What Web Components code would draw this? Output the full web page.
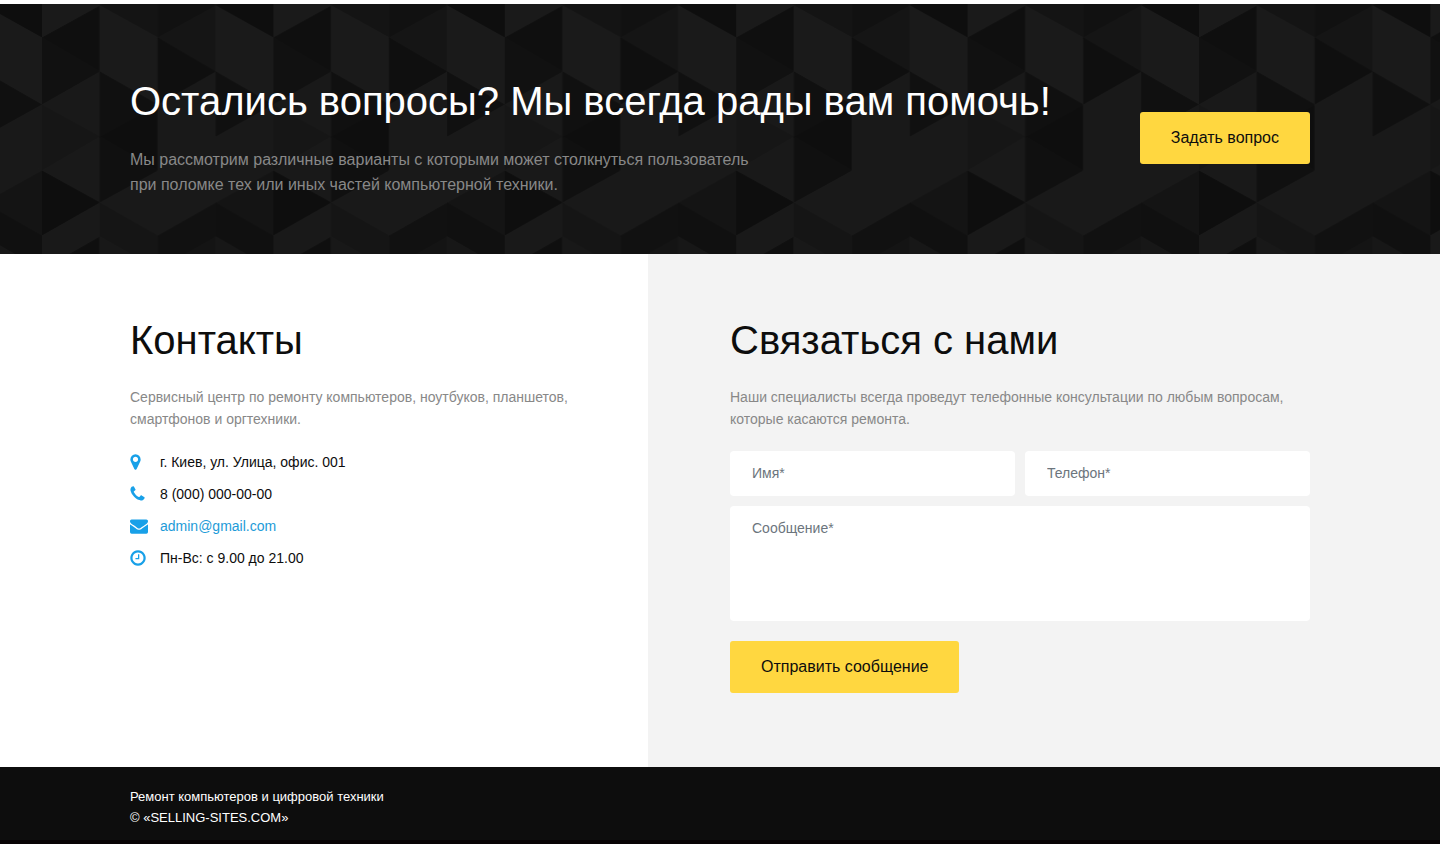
<!DOCTYPE html>
<html lang="ru">
<head>
<meta charset="utf-8">
<meta name="viewport" content="width=device-width, initial-scale=1">
<title>Ремонт компьютеров и цифровой техники</title>
<style>
body { margin: 0; padding-top: 4px; background: #fff; color: #0d0d0d; font-family: "Liberation Sans", Arial, sans-serif; font-size: 14px; }
</style>
</head>
<body>
<question-banner>
  <span slot="title">Остались вопросы? Мы всегда рады вам помочь!</span>
  <span slot="text">Мы рассмотрим различные варианты с которыми может столкнуться пользователь при поломке тех или иных частей компьютерной техники.</span>
  <action-button slot="action">Задать вопрос</action-button>
</question-banner>
<contact-section>
  <contact-info slot="info">
    <section-heading>Контакты
      <span slot="lead">Сервисный центр по ремонту компьютеров, ноутбуков, планшетов, смартфонов и оргтехники.</span>
    </section-heading>
    <contact-item icon="pin">г. Киев, ул. Улица, офис. 001</contact-item>
    <contact-item icon="phone">8 (000) 000-00-00</contact-item>
    <contact-item icon="mail" href="mailto:admin@gmail.com">admin@gmail.com</contact-item>
    <contact-item icon="clock">Пн-Вс: с 9.00 до 21.00</contact-item>
  </contact-info>
  <contact-form slot="form">
    <section-heading>Связаться с нами
      <span slot="lead">Наши специалисты всегда проведут телефонные консультации по любым вопросам, которые касаются ремонта.</span>
    </section-heading>
  </contact-form>
</contact-section>
<site-footer>
  <span slot="about">Ремонт компьютеров и цифровой техники</span>
  <span slot="copyright">© «SELLING-SITES.COM»</span>
</site-footer>

<script>
const define = (name, html, setup) => {
  customElements.define(name, class extends HTMLElement {
    constructor() {
      super();
      this.attachShadow({ mode: 'open' }).innerHTML = html;
    }
    connectedCallback() {
      if (setup) setup(this, this.shadowRoot);
    }
  });
};

/* Triangular mosaic: four columns per tile, shades listed from top to bottom.
   The last shade of a column fills the half-step triangle at the tile's foot. */
const edges = [-28, 38, 105, 171, 236, 302];
const middles = [6, 72, 137, 203, 269];
const columns = [0, 58, 116, 174, 231.4];
const shades = [
  ['1a', '0f', '11', '19', '16', '19', '0e', '19', '19', '0f'],
  ['14', '1a', '1a', '10', '0e', '10', '19', '15', '15', '18'],
  ['11', '15', '0f', '19', '19', '19', '19', '11', '11', '14'],
  ['0e', '1a', '1a', '10', '19', '19', '14', '10', '10', '17']
];
const mosaic = () => shades.map((list, c) => list.map((shade, i) => {
  const even = c % 2 === 0;
  const xa = columns[even ? c : c + 1];
  const xb = columns[even ? c + 1 : c];
  const k = i >> 1;
  let points = i % 2 === 0
    ? [[xa, edges[k]], [xa, edges[k + 1]], [xb, middles[k]]]
    : [[xb, middles[k]], [xb, middles[k + 1]], [xa, edges[k + 1]]];
  if (i === 9) points = [[xb, 237], [xb, 303], [xa, 270]];
  const colour = '#' + shade.repeat(3);
  return `<polygon points="${points.join(' ')}" fill="${colour}" stroke="${colour}"/>`;
}).join('')).join('');

define('question-banner', `
  <style>
    :host { display: block; position: relative; background: #161616; color: #fff; }
    .pattern { position: absolute; inset: 0; width: 100%; height: 100%; }
    .inner { position: relative; box-sizing: border-box; max-width: 1220px; min-height: 250px; margin: 0 auto; padding: 18px 20px 0;
      display: flex; align-items: center; justify-content: space-between; gap: 40px; }
    h2 { margin: 0 0 24px; font-size: 40px; line-height: 44px; font-weight: 400; }
    p { margin: 0; max-width: 640px; font-size: 16px; line-height: 25px; color: #888; }
  </style>
  <svg class="pattern" aria-hidden="true">
    <defs><pattern id="mosaic" width="231.4" height="306" patternUnits="userSpaceOnUse" patternTransform="translate(42 -4)">${mosaic()}</pattern></defs>
    <rect width="100%" height="100%" fill="url(#mosaic)"/>
  </svg>
  <div class="inner">
    <div class="copy">
      <h2><slot name="title"></slot></h2>
      <p><slot name="text"></slot></p>
    </div>
    <slot name="action"></slot>
  </div>`);

define('action-button', `
  <style>
    :host { display: inline-block; }
    button { display: block; margin: 0; border: 0; border-radius: 3px; padding: 14px 31px; background: #ffd740; color: #0d0d0d;
      font: 16px/24px "Liberation Sans", Arial, sans-serif; white-space: nowrap; cursor: pointer; }
  </style>
  <button type="button"><slot></slot></button>`);

define('contact-section', `
  <style>
    :host { display: grid; grid-template-columns: 45% 55%; }
    .info, .form { box-sizing: border-box; padding-top: 64px; padding-bottom: 74px; }
    .info { padding-left: max(20px, calc(50vw - 590px)); padding-right: 70px; }
    .form { padding-left: 82px; padding-right: max(20px, calc(50vw - 590px)); background: #f3f3f3; }
  </style>
  <div class="info"><slot name="info"></slot></div>
  <div class="form"><slot name="form"></slot></div>`);

define('section-heading', `
  <style>
    :host { display: block; margin-bottom: 21px; }
    h2 { margin: 0 0 24px; font-size: 40px; line-height: 44px; font-weight: 400; }
    p { margin: 0; font-size: 14px; line-height: 22px; color: #888; }
  </style>
  <h2><slot></slot></h2>
  <p><slot name="lead"></slot></p>`);

define('contact-info', `
  <style>
    :host { display: flex; flex-direction: column; gap: 10px; }
    ::slotted(section-heading) { margin-bottom: 11px; }
  </style>
  <slot></slot>`);

/* Icon outlines on a 1792-unit em with the y axis pointing down. */
const icons = {
  pin: [1024, '<path d="M768 640q0-106-75-181t-181-75-181 75-75 181 75 181 181 75 181-75 75-181zm256 0q0 109-33 179l-364 774q-16 33-47.500 52t-67.500 19-67.500-19-46.500-52l-365-774q-33-70-33-179 0-212 150-362t362-150 362 150 150 362z"/>'],
  phone: [1408, '<path d="M1408 1240q0 27-10 70.500t-21 68.500q-21 50-122 106-94 51-186 51-27 0-52.500-3.500t-57.500-12.500-47.500-14.500-55.500-20.500-49-18q-98-35-175-83-128-79-264.500-215.500t-215.500-264.500q-48-77-83-175-3-9-18-49t-20.500-55.500-14.500-47.500-12.500-57.500-3.500-52.500q0-92 51-186 56-101 106-122 25-11 68.500-21t70.500-10q14 0 21 3 18 6 53 76 11 19 30 54t35 63.500 31 53.500q3 4 17.500 25t21.500 35.500 7 28.500q0 20-28.500 50t-62 55-62 53-28.500 46q0 9 5 22.500t8.500 20.500 14 24 11.500 19q76 137 174 235t235 174q2 1 19 11.500t24 14 20.500 8.500 22.500 5q18 0 46-28.500t53-62 55-62 50-28.500q14 0 28.500 7t35.500 21.500 25 17.500q25 15 53.500 31t63.500 35 54 30q70 35 76 53 3 7 3 21z"/>'],
  mail: [1792, '<path d="M1792 710v794q0 66-47 113t-113 47h-1472q-66 0-113-47t-47-113v-794q44 49 101 87 362 246 497 345 57 42 92.500 65.500t94.500 48 110 24.500h2q51 0 110-24.500t94.500-48 92.500-65.500q170-123 498-345 57-39 100-87zm0-294q0 79-49 151t-122 123q-376 261-468 325-10 7-42.500 30.500t-54 38-52 32.500-57.500 27-50 9h-2q-23 0-50-9t-57.500-27-52-32.500-54-38-42.500-30.500q-91-64-262-182.500t-205-142.500q-62-42-117-115.500t-55-136.500q0-78 41.500-130t118.500-52h1472q65 0 112.500 47t47.500 113z"/>'],
  clock: [1536, '<path d="M896 544v448q0 14-9 23t-23 9h-320q-14 0-23-9t-9-23v-64q0-14 9-23t23-9h224v-352q0-14 9-23t23-9h64q14 0 23 9t9 23zm416 352q0-148-73-273t-198-198-273-73-273 73-198 198-73 273 73 273 198 198 273 73 273-73 198-198 73-273zm224 0q0 209-103 385.500t-279.500 279.500-385.500 103-385.500-103-279.500-279.500-103-385.500 103-385.500 279.500-279.500 385.500-103 385.500 103 279.500 279.500 103 385.500z"/>']
};

define('contact-item', `
  <style>
    :host { display: grid; grid-template-columns: 20px 1fr; column-gap: 10px; align-items: center; font-size: 14px; line-height: 22px; }
    svg { display: block; fill: #18a0e8; }
    a { color: #1d9bd8; text-decoration: none; }
  </style>
  <span class="icon" aria-hidden="true"></span>
  <span class="text"><slot></slot></span>`, (host, root) => {
  const [width, shape] = icons[host.getAttribute('icon')];
  root.querySelector('.icon').innerHTML =
    `<svg width="${Math.ceil(width * 18 / 1792)}" height="18" viewBox="0 0 ${width} 1792">${shape}</svg>`;
  if (host.hasAttribute('href')) {
    root.querySelector('.text').innerHTML = `<a href="${host.getAttribute('href')}"><slot></slot></a>`;
  }
});

define('contact-form', `
  <style>
    :host { display: block; }
    form { display: grid; grid-template-columns: 1fr 1fr; gap: 10px; }
    input, textarea { display: block; box-sizing: border-box; width: 100%; min-width: 0; margin: 0; border: 0; border-radius: 4px; background: #fff;
      color: #0d0d0d; font: 14px/22px "Liberation Sans", Arial, sans-serif; padding: 11px 22px 12px; }
    input { height: 45px; }
    textarea { height: 115px; resize: none; }
    ::placeholder { color: #6c757d; opacity: 1; }
    .wide { grid-column: 1 / -1; }
    .send { padding-top: 10px; }
  </style>
  <slot></slot>
  <form>
    <input type="text" name="name" placeholder="Имя*" aria-label="Имя">
    <input type="tel" name="phone" placeholder="Телефон*" aria-label="Телефон">
    <textarea class="wide" name="message" placeholder="Сообщение*" aria-label="Сообщение"></textarea>
    <div class="wide send"><action-button>Отправить сообщение</action-button></div>
  </form>`);

define('site-footer', `
  <style>
    :host { display: block; background: #0d0d0d; color: #fff; border-bottom: 4px solid #080304; }
    .inner { display: block; box-sizing: border-box; max-width: 1220px; margin: 0 auto; padding: 19px 20px 12px; font-size: 13px; line-height: 21px; }
    p { margin: 0; }
  </style>
  <footer class="inner">
    <p><slot name="about"></slot></p>
    <p><slot name="copyright"></slot></p>
  </footer>`);
</script>
</body>
</html>
